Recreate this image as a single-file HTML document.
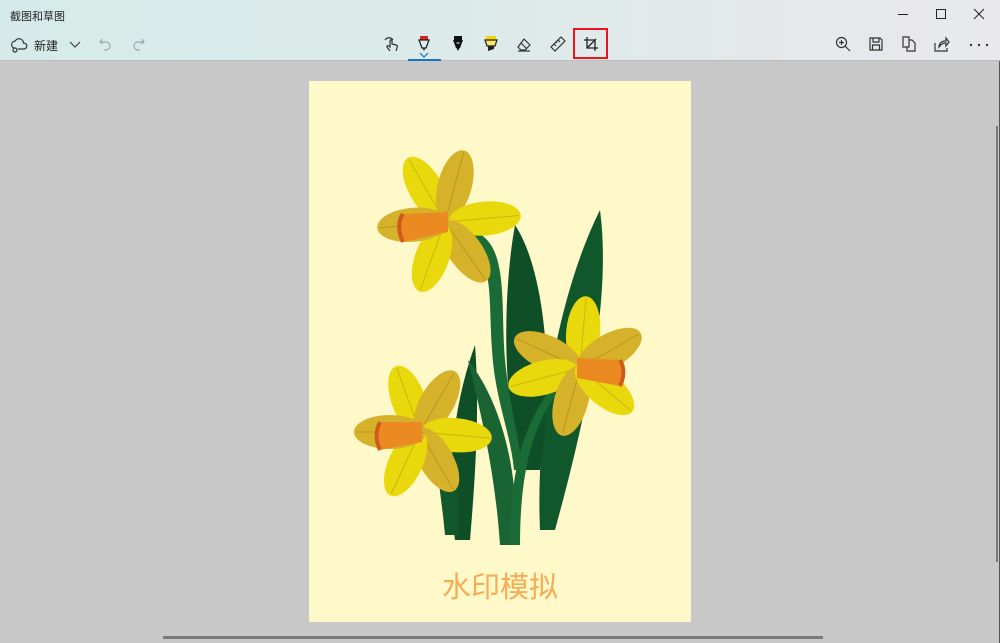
<!DOCTYPE html>
<html><head><meta charset="utf-8"><style>
*{margin:0;padding:0;box-sizing:border-box}
body{width:1000px;height:643px;overflow:hidden;background:#c8c8c8;font-family:"Liberation Sans","Noto Sans CJK SC",sans-serif;position:relative}
#hdr{position:absolute;left:0;top:0;width:1000px;height:61px;background:linear-gradient(90deg,#d6ebe9 0%,#dcebea 45%,#e6e8ea 80%,#e9e9ec 100%);border-bottom:1px solid #bdbdbd}
.t{position:absolute;font-size:11px;color:#222}
svg.i{position:absolute}
#img{position:absolute;left:309px;top:81px;width:382px;height:541px;background:#fff8c8}
</style></head><body>
<div id="hdr">
<div class="t" style="left:10px;top:8px">截图和草图</div>
<svg class="i" style="left:10px;top:36px" width="18" height="18" viewBox="0 0 18 18" fill="none" stroke="#333" stroke-width="1.2"><path d="M4 12a3.5 3.5 0 0 1 1-6.8A4.5 4.5 0 0 1 13.5 7a3 3 0 0 1 .5 6H8"/><circle cx="5" cy="14" r="2"/></svg>
<div class="t" style="left:34px;top:37px;font-size:12px">新建</div>
<svg class="i" style="left:68px;top:38px" width="14" height="12" viewBox="0 0 14 12" fill="none" stroke="#444" stroke-width="1.2"><path d="M2 4l5 5 5-5"/></svg>
<svg class="i" style="left:97px;top:36px" width="16" height="16" viewBox="0 0 16 16" fill="none" stroke="#9aa" stroke-width="1.2"><path d="M5 3L3 6l3 2M3 6h6a4 4 0 0 1 0 8H7"/></svg>
<svg class="i" style="left:131px;top:36px" width="16" height="16" viewBox="0 0 16 16" fill="none" stroke="#9aa" stroke-width="1.2"><path d="M11 3l2 3-3 2M13 6H7a4 4 0 0 0 0 8h2"/></svg>
<svg class="i" style="left:383px;top:35px" width="18" height="18" viewBox="0 0 18 18" fill="none" stroke="#333" stroke-width="1.2"><path d="M2 5c2-3 6-3 8 0M7 16l-3-4c-.5-1 1-2 2-1l1 1V6c0-1.5 2-1.5 2 0v3l4 1c1 .3 1.5 1 1.3 2L13 16"/></svg>
<svg class="i" style="left:417px;top:35px" width="14" height="18" viewBox="0 0 14 18"><rect x="3" y="1" width="8" height="4" fill="#e02020"/><path d="M2 5h10l-3 8H5z" fill="none" stroke="#222" stroke-width="1.3"/><path d="M5.5 13h3L7 16z" fill="#222"/></svg>
<svg class="i" style="left:419px;top:52px" width="10" height="6" viewBox="0 0 10 6" fill="none" stroke="#1a73c8" stroke-width="1.2"><path d="M1 1l4 4 4-4"/></svg>
<div style="position:absolute;left:408px;top:59px;width:33px;height:2px;background:#1a73c8"></div>
<svg class="i" style="left:451px;top:35px" width="14" height="18" viewBox="0 0 14 18"><rect x="3" y="1" width="8" height="4" fill="#111"/><path d="M2 5h10l-3 8H5z" fill="#111"/><path d="M5.5 8h3" stroke="#fff"/><path d="M5.5 13h3L7 16z" fill="#111"/></svg>
<svg class="i" style="left:483px;top:35px" width="16" height="18" viewBox="0 0 16 18"><rect x="3" y="1" width="10" height="4" fill="#f0d800"/><path d="M2 5h12l-2 6H4z" fill="#f8e86a" stroke="#222" stroke-width="1.2"/><path d="M5 11h6v3l-6 2z" fill="#222"/></svg>
<svg class="i" style="left:515px;top:37px" width="18" height="16" viewBox="0 0 18 16" fill="none" stroke="#333" stroke-width="1.2"><path d="M9 2l6 6-5 5H6L3 10z M6 6l6 6M3 14h12"/></svg>
<svg class="i" style="left:549px;top:35px" width="18" height="18" viewBox="0 0 18 18" fill="none" stroke="#333" stroke-width="1.2"><path d="M12 2l4 4-10 10-4-4z M9 5l2 2M7 7l1 1M5 9l2 2"/></svg>
<div style="position:absolute;left:573px;top:28px;width:35px;height:31px;border:2px solid #e8141e"></div>
<svg class="i" style="left:583px;top:36px" width="16" height="16" viewBox="0 0 16 16" fill="none" stroke="#222" stroke-width="1.3"><path d="M4 1v11h11M1 4h11v11M4 12L13 3"/></svg>
<svg class="i" style="left:835px;top:36px" width="16" height="16" viewBox="0 0 16 16" fill="none" stroke="#333" stroke-width="1.2"><circle cx="6.5" cy="6.5" r="5"/><path d="M10 10l5 5M4 6.5h5M6.5 4v5"/></svg>
<svg class="i" style="left:869px;top:37px" width="14" height="14" viewBox="0 0 14 14" fill="none" stroke="#333" stroke-width="1.2"><path d="M1 1h10l2 2v10H1z M4 1v4h6V1 M3.5 13V8h7v5"/></svg>
<svg class="i" style="left:902px;top:36px" width="14" height="16" viewBox="0 0 14 16" fill="none" stroke="#333" stroke-width="1.2"><path d="M1 1h6v10H1z M7 4h3l3 3v8H5v-4"/></svg>
<svg class="i" style="left:934px;top:36px" width="16" height="16" viewBox="0 0 16 16" fill="none" stroke="#333" stroke-width="1.2"><path d="M1 7v8h12v-3M5 11c0-4 3-6 7-6V2l3 4-3 4V7c-3 0-5 1-7 4z"/></svg>
<svg class="i" style="left:968px;top:43px" width="22" height="4" viewBox="0 0 22 4" fill="#333"><circle cx="3" cy="2" r="1.2"/><circle cx="11" cy="2" r="1.2"/><circle cx="19" cy="2" r="1.2"/></svg>
<svg class="i" style="left:897px;top:8px" width="12" height="12" viewBox="0 0 12 12" stroke="#222"><path d="M1 6.5h10"/></svg>
<svg class="i" style="left:935px;top:8px" width="12" height="12" viewBox="0 0 12 12" fill="none" stroke="#222"><rect x="1.5" y="1.5" width="9" height="9"/></svg>
<svg class="i" style="left:973px;top:8px" width="12" height="12" viewBox="0 0 12 12" stroke="#222"><path d="M1 1l10 10M11 1L1 11"/></svg>
</div>

<div id="img"></div>
<svg style="position:absolute;left:0;top:0" width="1000" height="643">
<defs>
<g id="pY"><ellipse rx="36" ry="17" fill="#e8d80c"/><path d="M-34 0H34" stroke="#c9b70a" stroke-width="1"/></g>
<g id="pG"><ellipse rx="36" ry="17" fill="#d6b22a"/><path d="M-34 0H34" stroke="#b99520" stroke-width="1"/></g>
</defs>
<path d="M540 530 C535 420 560 290 600 210 C612 300 585 420 555 530 Z" fill="#10572b"/>
<path d="M520 470 C500 380 505 280 515 225 C545 270 555 380 540 470 Z" fill="#0f4f27"/>
<path d="M470 230 C510 240 500 300 505 360 C510 410 520 440 522 470 L514 470 C510 430 495 400 492 350 C488 290 495 255 460 240 Z" fill="#1b6b37"/>
<path d="M455 540 C445 470 455 400 475 345 C480 410 475 480 470 540 Z" fill="#0f4f27"/>
<path d="M500 545 C495 470 480 410 468 360 C500 400 520 470 515 545 Z" fill="#1a6434"/>
<path d="M510 545 C510 480 520 430 550 390 L556 395 C530 430 520 480 520 545 Z" fill="#1b6b37"/>
<path d="M445 535 C440 480 430 440 438 410 C455 450 460 490 458 535 Z" fill="#12582d"/>
<g transform="translate(445,222)">
<use href="#pY" transform="rotate(-120) translate(38,0)"/>
<use href="#pG" transform="rotate(-75) translate(38,0)"/>
<use href="#pY" transform="rotate(-5) translate(40,0)"/>
<use href="#pG" transform="rotate(55) translate(36,0)"/>
<use href="#pY" transform="rotate(110) translate(38,0)"/>
<use href="#pG" transform="rotate(175) translate(32,0)"/>
<path d="M3 -10 L-42 -8 C-48 0 -46 12 -42 20 L3 10 Z" fill="#ec8a22"/>
<path d="M-42 -8 C-48 0 -46 12 -42 20" stroke="#d05a1e" stroke-width="4" fill="none"/>
</g>
<g transform="translate(580,368)">
<use href="#pY" transform="rotate(-85) translate(36,0)"/>
<use href="#pG" transform="rotate(-155) translate(36,0)"/>
<use href="#pG" transform="rotate(-30) translate(34,0)"/>
<use href="#pY" transform="rotate(165) translate(38,0)"/>
<use href="#pG" transform="rotate(105) translate(34,0)"/>
<use href="#pY" transform="rotate(40) translate(32,0)"/>
<path d="M-3 -10 L40 -8 C45 0 44 10 40 18 L-3 10 Z" fill="#ec8a22"/>
<path d="M40 -8 C45 0 44 10 40 18" stroke="#d05a1e" stroke-width="4" fill="none"/>
</g>
<g transform="translate(420,432)">
<use href="#pY" transform="rotate(-110) translate(34,0)"/>
<use href="#pG" transform="rotate(-60) translate(34,0)"/>
<use href="#pY" transform="rotate(5) translate(36,0)"/>
<use href="#pG" transform="rotate(60) translate(32,0)"/>
<use href="#pY" transform="rotate(115) translate(34,0)"/>
<use href="#pG" transform="rotate(180) translate(30,0)"/>
<path d="M2 -10 L-40 -10 C-45 0 -44 10 -40 18 L2 10 Z" fill="#ec8a22"/>
<path d="M-40 -10 C-45 0 -44 10 -40 18" stroke="#d05a1e" stroke-width="4" fill="none"/>
</g>
<text x="500" y="597" text-anchor="middle" font-family="Noto Sans CJK SC, sans-serif" font-size="29" fill="#f5ad54">水印模拟</text>
<rect x="163" y="636" width="660" height="3" fill="#7a7a7a"/>
<rect x="996" y="126" width="2" height="436" fill="#7a7a7a"/>
<rect x="999" y="61" width="1" height="582" fill="#555"/>
</svg>
</body></html>
